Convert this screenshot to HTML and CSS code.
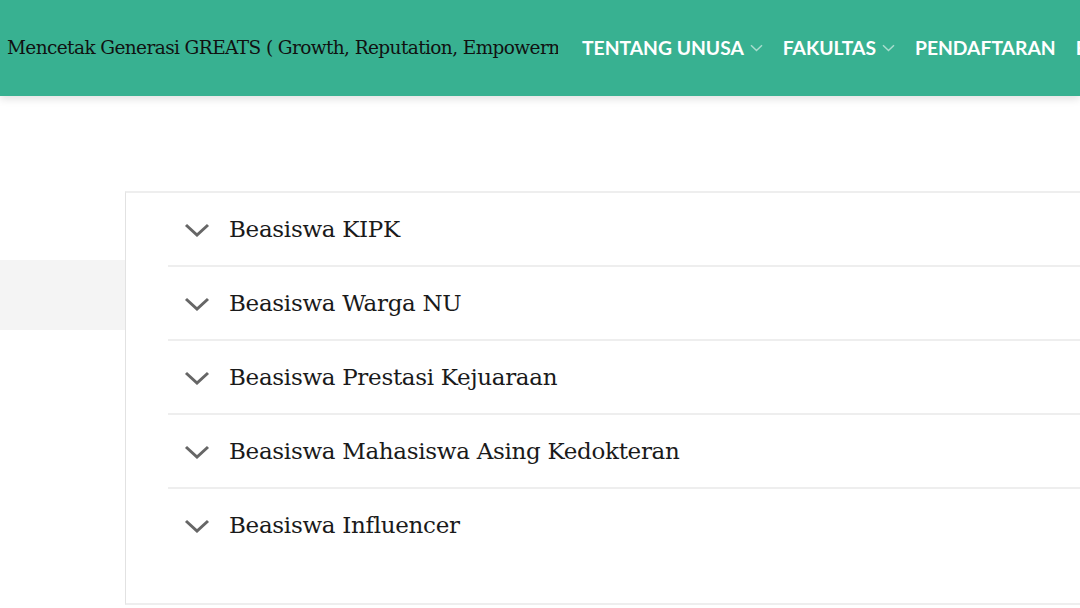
FILE: index.html
```html
<!DOCTYPE html>
<html lang="id">
<head>
<meta charset="utf-8">
<title>Beasiswa UNUSA</title>
<link rel="stylesheet" href="styles.css">
</head>
<body>
<header class="topbar">
  <div class="tagline">Mencetak Generasi GREATS ( Growth, Reputation, Empowerment, Accountability, Teamwork, Spirituality )</div>
  <nav class="menu">
    <a class="menu-item" href="#">TENTANG UNUSA <svg class="caret" viewBox="0 0 13 8" width="13" height="8"><path d="M1 1.2 L6.5 6.5 L12 1.2" fill="none" stroke="currentColor" stroke-width="1.5"/></svg></a>
    <a class="menu-item" href="#">FAKULTAS <svg class="caret" viewBox="0 0 13 8" width="13" height="8"><path d="M1 1.2 L6.5 6.5 L12 1.2" fill="none" stroke="currentColor" stroke-width="1.5"/></svg></a>
    <a class="menu-item" href="#">PENDAFTARAN</a>
    <a class="menu-item" href="#">BERITA</a>
  </nav>
</header>
<main class="content">
  <aside class="side">
    <div class="side-block"></div>
  </aside>
  <section class="panel">
    <div class="acc-item"><svg class="chev" viewBox="0 0 26 14" width="26" height="14"><path d="M2 2 L13 12 L24 2" fill="none" stroke="currentColor" stroke-width="3"/></svg><span class="acc-title">Beasiswa KIPK</span></div>
    <div class="acc-item"><svg class="chev" viewBox="0 0 26 14" width="26" height="14"><path d="M2 2 L13 12 L24 2" fill="none" stroke="currentColor" stroke-width="3"/></svg><span class="acc-title">Beasiswa Warga NU</span></div>
    <div class="acc-item"><svg class="chev" viewBox="0 0 26 14" width="26" height="14"><path d="M2 2 L13 12 L24 2" fill="none" stroke="currentColor" stroke-width="3"/></svg><span class="acc-title">Beasiswa Prestasi Kejuaraan</span></div>
    <div class="acc-item"><svg class="chev" viewBox="0 0 26 14" width="26" height="14"><path d="M2 2 L13 12 L24 2" fill="none" stroke="currentColor" stroke-width="3"/></svg><span class="acc-title">Beasiswa Mahasiswa Asing Kedokteran</span></div>
    <div class="acc-item"><svg class="chev" viewBox="0 0 26 14" width="26" height="14"><path d="M2 2 L13 12 L24 2" fill="none" stroke="currentColor" stroke-width="3"/></svg><span class="acc-title">Beasiswa Influencer</span></div>
  </section>
</main>
</body>
</html>
```
FILE: styles.css
```css
html, body {
  margin: 0;
  padding: 0;
  background: #ffffff;
  overflow: hidden;
}
body {
  width: 1080px;
  height: 608px;
  font-family: "DejaVu Serif", Georgia, serif;
}
.topbar {
  height: 96px;
  background: #38b191;
  display: flex;
  align-items: center;
  padding-left: 7px;
  box-shadow: 0 3px 8px rgba(0, 0, 0, 0.12);
  position: relative;
  z-index: 2;
  white-space: nowrap;
  overflow: hidden;
}
.tagline {
  width: 551px;
  flex: none;
  overflow: hidden;
  white-space: nowrap;
  font-family: "DejaVu Serif", Georgia, serif;
  font-size: 18.5px;
  color: #111;
  letter-spacing: -0.6px;
  margin-top: -1px;
}
.menu {
  display: flex;
  align-items: center;
  margin-left: 24px;
  gap: 20px;
  flex: none;
}
.menu-item {
  font-family: Lato, "Open Sans", sans-serif;
  font-weight: 700;
  font-size: 19.3px;
  color: #ffffff;
  text-decoration: none;
  display: flex;
  align-items: center;
  gap: 6px;
  margin-top: -2px;
}
.caret {
  color: #a9ddce;
  margin-top: 1px;
}
.content {
  display: flex;
  margin-top: 95px;
}
.side {
  width: 125px;
  flex: none;
}
.side-block {
  margin-top: 69px;
  height: 70px;
  background: #f4f4f4;
}
.panel {
  flex: 1;
  border-left: 1px solid #e2e2e2;
  border-top: 2px solid #eeeeee;
  border-bottom: 2px solid #eeeeee;
  padding-left: 42px;
  padding-bottom: 42px;
}
.acc-item {
  height: 72px;
  display: flex;
  align-items: center;
  border-bottom: 2px solid #eeeeee;
  padding-left: 16px;
}
.acc-item:last-child {
  border-bottom: none;
}
.chev {
  color: #666666;
  flex: none;
  margin-right: 19px;
  margin-top: 2px;
}
.acc-title {
  font-family: "DejaVu Serif", Georgia, serif;
  font-size: 23px;
  color: #1a1a1a;
  letter-spacing: -0.3px;
}
```
